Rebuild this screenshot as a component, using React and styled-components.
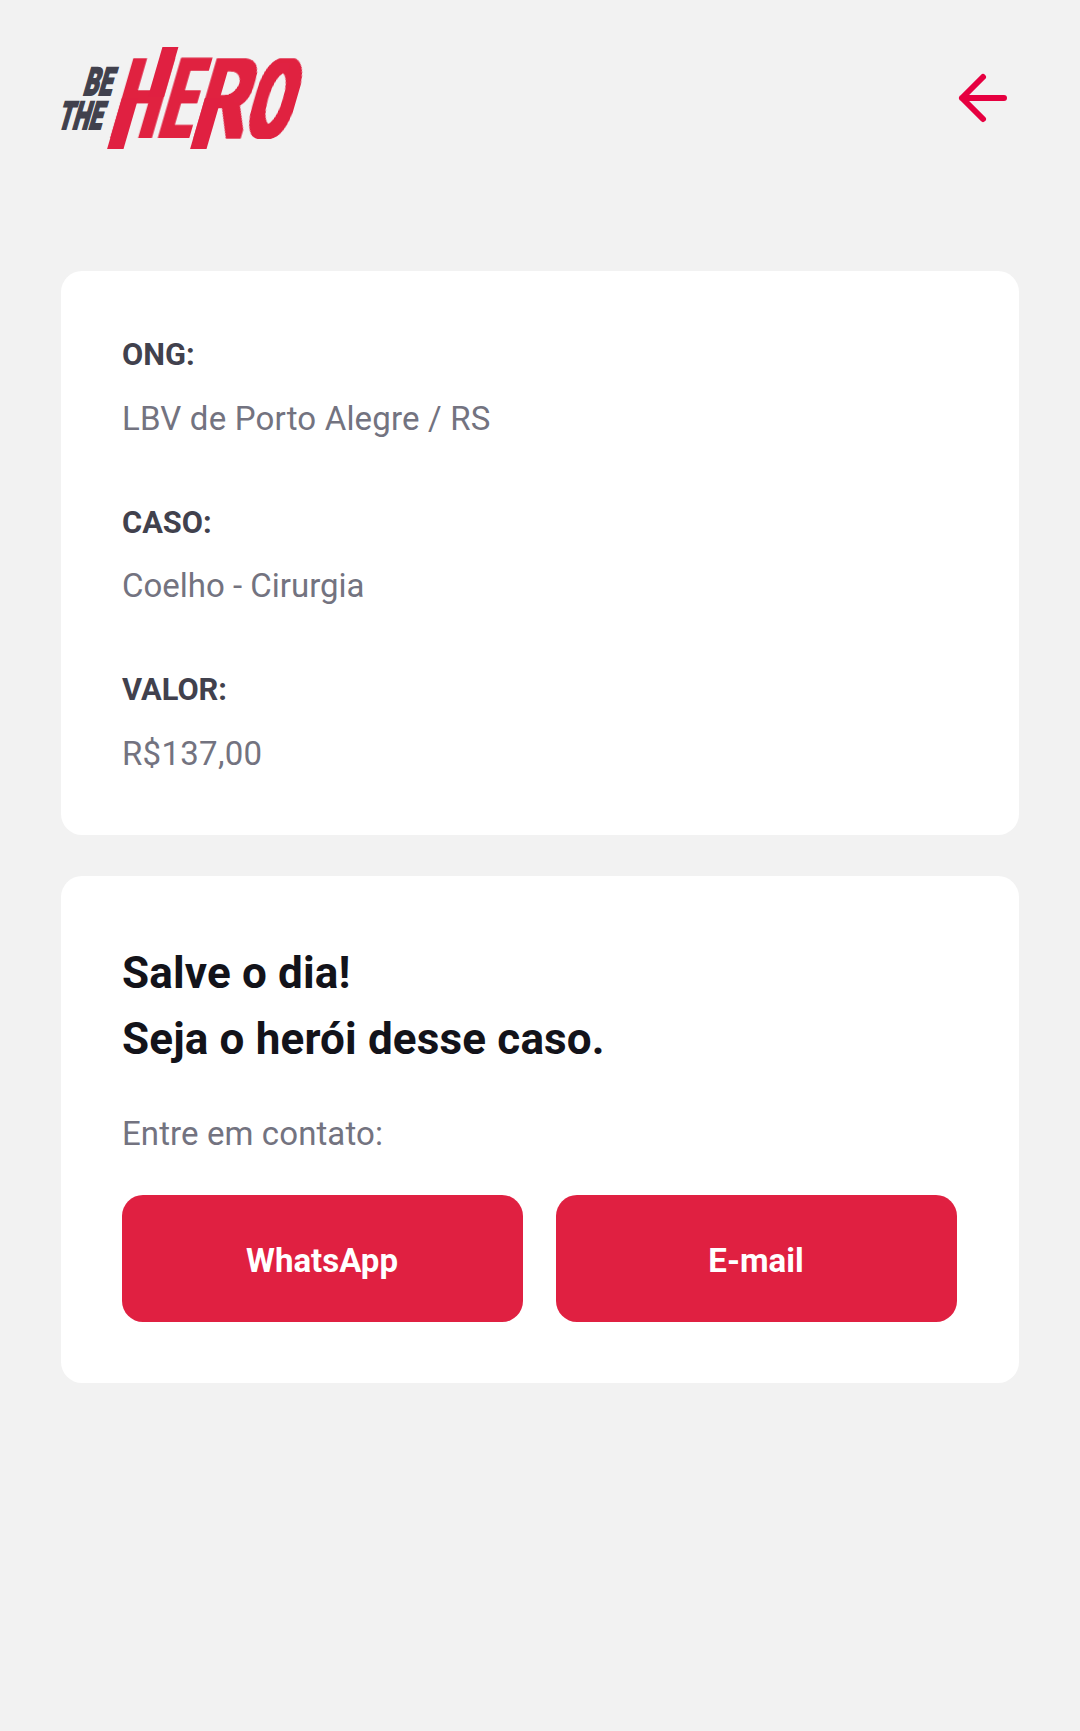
import React from "react";
import styled, { createGlobalStyle } from "styled-components";

const GlobalStyle = createGlobalStyle`
  *, *::before, *::after { box-sizing: border-box; }
  body {
    margin: 0;
    background: #f2f2f2;
    font-family: Roboto, "Liberation Sans", sans-serif;
  }
`;

const Screen = styled.main`
  min-height: 1731px;
  padding: 47px 61px 0;
  background: #f2f2f2;
`;

const Header = styled.header`
  display: flex;
  align-items: center;
  justify-content: space-between;
  height: 102px;
  margin-bottom: 122px;
`;

const LogoSvg = styled.svg`
  display: block;
  width: 242px;
  height: 102px;
  overflow: visible;
  font-family: Roboto, sans-serif;
`;

const BackButton = styled.button`
  display: flex;
  padding: 0;
  border: 0;
  background: none;
  color: #e60040;
`;

const Card = styled.section`
  padding: ${(p) => p.$top || 61}px 62px 61px 61px;
  border-radius: 21px;
  background: #fff;

  & + & { margin-top: 41px; }
`;

const Details = styled.dl`
  display: flex;
  flex-direction: column;
  gap: 61.9px;
  margin: 0;
  padding-bottom: 1.1px;
`;

const Label = styled.dt`
  font-size: 30.8px;
  line-height: 45px;
  font-weight: 700;
  color: #41414d;
`;

const Value = styled.dd`
  margin: 21.7px 0 0;
  font-size: 33px;
  line-height: 39px;
  letter-spacing: ${(p) => p.$tracking}px;
  color: #737380;
`;

const Title = styled.h1`
  margin: 0;
  font-size: 44px;
  line-height: 66px;
  font-weight: 700;
  letter-spacing: 0.16px;
  color: #13131a;
`;

const Hint = styled.p`
  margin: 42px 0;
  font-size: 33px;
  line-height: 39px;
  letter-spacing: 0.1px;
  color: #737380;
`;

const Actions = styled.div`
  display: grid;
  grid-template-columns: 1fr 1fr;
  gap: 33px;
`;

const Action = styled.button`
  height: 127px;
  padding: 4px 1px 0 0;
  border: 0;
  border-radius: 21px;
  background: #e02041;
  color: #fff;
  font-family: inherit;
  font-size: 33px;
  font-weight: 700;
`;

const heroLetters = [
  { letter: "H", x: -0.4, stretch: 0.595, rise: 1 },
  { letter: "E", x: 48.3, stretch: 0.48, rise: 1 },
  { letter: "R", x: 82, stretch: 0.73, rise: 1 },
  { letter: "O", x: 134.3, stretch: 0.575, rise: 0.985 },
];

function Logo() {
  return (
    <LogoSvg viewBox="0 0 242 102" role="img" aria-label="Be The Hero">
      <defs>
        <filter id="heavy" x="-10%" y="-10%" width="120%" height="120%">
          <feComponentTransfer>
            <feFuncA type="linear" slope="1.4" />
          </feComponentTransfer>
          <feMorphology operator="dilate" radius="5 4" />
        </filter>
      </defs>
      <g fill="#41414d" stroke="#41414d" strokeWidth="1.8" fontSize="38.6" fontWeight="900">
        <text transform="translate(21.3 48) skewX(-16.2) scale(.61 1)">BE</text>
        <text transform="translate(-4.2 82) skewX(-16.2) scale(.6 1)">THE</text>
      </g>
      <g fill="#e02041" transform="translate(49.3 91) skewX(-16.2)">
        <g filter="url(#heavy)" fontSize="100.8" fontWeight="300">
          {heroLetters.map(({ letter, x, stretch, rise }) => (
            <text key={letter} transform={`translate(${x} ${-3 - rise}) scale(${stretch} ${rise})`}>{letter}</text>
          ))}
        </g>
        <rect x="0" y="-40" width="16.4" height="51" />
        <rect x="25.7" y="-91" width="16" height="50" />
        <rect x="83" y="-40" width="16.4" height="51" />
      </g>
    </LogoSvg>
  );
}

function BackArrow() {
  return (
    <svg width="72" height="72" viewBox="0 0 24 24" fill="none" stroke="currentColor" strokeWidth="2" strokeLinecap="round" strokeLinejoin="round">
      <path d="M19 12H5M12 19l-7-7 7-7" />
    </svg>
  );
}

const incident = [
  { label: "ONG:", value: "LBV de Porto Alegre / RS", tracking: 0.18 },
  { label: "CASO:", value: "Coelho - Cirurgia", tracking: 0 },
  { label: "VALOR:", value: "R$137,00", tracking: 0.28 },
];

export default function App() {
  return (
    <Screen>
      <GlobalStyle />
      <Header>
        <Logo />
        <BackButton aria-label="Voltar"><BackArrow /></BackButton>
      </Header>
      <Card>
        <Details>
          {incident.map(({ label, value, tracking }) => (
            <div key={label}>
              <Label>{label}</Label>
              <Value $tracking={tracking}>{value}</Value>
            </div>
          ))}
        </Details>
      </Card>
      <Card $top={64}>
        <Title>Salve o dia!<br />Seja o herói desse caso.</Title>
        <Hint>Entre em contato:</Hint>
        <Actions>
          <Action>WhatsApp</Action>
          <Action>E-mail</Action>
        </Actions>
      </Card>
    </Screen>
  );
}
